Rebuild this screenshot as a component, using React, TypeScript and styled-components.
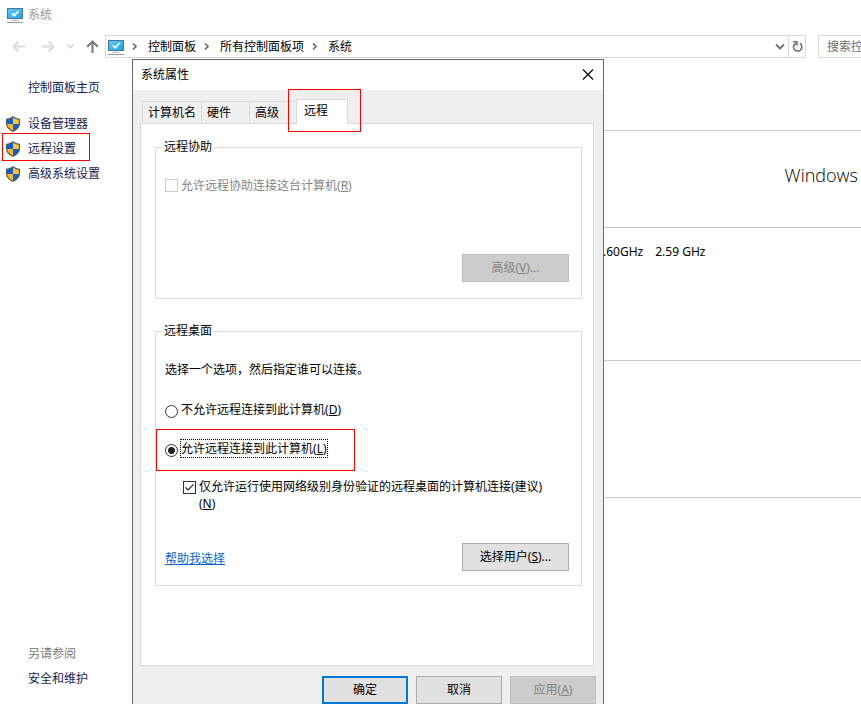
import React from "react";
import styled, { createGlobalStyle, css } from "styled-components";

const GlobalStyle = createGlobalStyle`
  *, *::before, *::after { box-sizing: border-box; }
  body {
    margin: 0;
    background: #fff;
    color: #000;
    font: 12px/16px "Noto Sans", "Noto Sans CJK SC", sans-serif;
  }
  button, input { font: inherit; color: inherit; }
`;

/* Red marker frame drawn around a highlighted element */
const marker = css`
  content: "";
  position: absolute;
  border: 1px solid #f00;
  pointer-events: none;
`;

const Window = styled.div`
  position: relative;
  display: flex;
  flex-direction: column;
  min-height: 100vh;
  overflow: hidden;
`;

const TitleBar = styled.header`
  display: flex;
  align-items: center;
  gap: 5px;
  height: 29px;
  padding-left: 7px;
  color: #999;
`;

const NavBar = styled.nav`
  display: flex;
  height: 23px;
  margin-top: 6px;
`;

const IconButton = styled.button`
  display: flex;
  align-items: center;
  justify-content: center;
  padding: 0;
  border: 0;
  background: none;
`;

const NavButtons = styled.div`
  display: flex;
  align-items: center;
  gap: 12px;
  flex: 0 0 105px;
  padding-left: 12px;
  ${IconButton}:first-child { margin-right: 5px; }
`;

const AddressBar = styled.div`
  display: flex;
  flex: 1;
  align-items: stretch;
  border: 1px solid #d9d9d9;
`;

const Crumbs = styled.ol`
  display: flex;
  flex: 1;
  align-items: center;
  margin: 0;
  padding: 0 0 0 2px;
  list-style: none;
`;

const Crumb = styled.li`
  display: flex;
  align-items: center;
  a { color: #000; text-decoration: none; }
`;

const CrumbArrow = styled.svg`
  width: 24px;
  height: 9px;
`;

const AddressButton = styled(IconButton)<{ $divided?: boolean }>`
  width: ${(p) => (p.$divided ? 17 : 16)}px;
  border-left: ${(p) => (p.$divided ? "1px solid #d9d9d9" : "0")};
`;

const SearchBox = styled.input`
  flex: 0 0 43px;
  width: 43px;
  margin-left: 12px;
  padding: 0 0 0 8px;
  border: 1px solid #d9d9d9;
  border-right: 0;
  border-radius: 0;
  outline: 0;
  &::placeholder { color: #6d6d6d; opacity: 1; }
`;

const Body = styled.div`
  display: flex;
  flex: 1;
`;

const Sidebar = styled.aside`
  display: flex;
  flex-direction: column;
  flex: 0 0 132px;
  padding: 22px 0 17px;
`;

const SideList = styled.ul`
  margin: 15px 0 auto;
  padding: 0;
  list-style: none;
`;

const SideItem = styled.li<{ $marked?: boolean }>`
  position: relative;
  display: flex;
  align-items: center;
  gap: 8px;
  height: 25px;
  padding-left: 5px;
  ${(p) =>
    p.$marked &&
    css`
      &::after { ${marker} left: 2px; top: -3px; width: 88px; height: 28px; }
    `}
`;

const SideLink = styled.a<{ $indent?: boolean }>`
  margin-left: ${(p) => (p.$indent ? 28 : 0)}px;
  color: #151c55;
  text-decoration: none;
`;

const SeeAlso = styled.div`
  margin: 0 0 9px 28px;
  color: #777;
`;

const Details = styled.main`
  flex: 1;
  min-width: 0;
  padding-top: 72px;
`;

const DetailSection = styled.section<{ $height: number }>`
  min-height: ${(p) => p.$height}px;
  border-top: 1px solid #c8c8c8;
`;

const Edition = styled.div`
  padding: 30px 3px 0 0;
  text-align: right;
  font: 18px/28px "Open Sans", "Noto Sans", sans-serif;
  font-weight: 300;
`;

const Processor = styled.div`
  display: flex;
  gap: 12px;
  padding: 16px 0 0 471px;
`;

const Dialog = styled.div`
  position: absolute;
  left: 132px;
  top: 59px;
  width: 472px;
  border: 1px solid #6b6b6b;
  border-bottom: 0;
  background: #efefef;
`;

const DialogTitle = styled.div`
  display: flex;
  align-items: center;
  justify-content: space-between;
  height: 30px;
  padding: 0 9px 0 8px;
  background: #fff;
`;

const Tabs = styled.div`
  display: flex;
  align-items: flex-end;
  height: 33px;
  padding-left: 9px;
`;

const Tab = styled.button<{ $width: number }>`
  position: relative;
  width: ${(p) => p.$width}px;
  height: 22px;
  padding: 0 0 0 5px;
  border: 1px solid #d9d9d9;
  border-width: 1px 0 0 1px;
  background: #f0f0f0;
  text-align: left;

  &[aria-selected="true"] {
    height: 25px;
    margin-bottom: -1px;
    padding: 0 0 2px 7px;
    border-right-width: 1px;
    background: #fff;
    z-index: 1;
  }
  &[aria-selected="true"]::after {
    ${marker}
    left: -9px;
    top: -11px;
    width: 73px;
    height: 43px;
  }
`;

const Panel = styled.div`
  margin: 0 9px 0 7px;
  padding: 15px 11px 79px 14px;
  border: 1px solid #d9d9d9;
  background: #fff;
`;

const Group = styled.fieldset`
  display: block;
  min-width: 0;
  margin: 0;
  padding: 0 12px 16px 9px;
  border: 1px solid #dcdcdc;
  & + & { margin-top: 24px; padding-bottom: 14px; }
`;

const Legend = styled.legend`
  margin-left: -3px;
  padding: 0 2px;
`;

const Option = styled.label<{ $top: number; $indent?: boolean; $muted?: boolean; $marked?: boolean }>`
  position: relative;
  display: flex;
  align-items: flex-start;
  gap: 3px;
  width: fit-content;
  margin: ${(p) => p.$top}px 0 0 ${(p) => (p.$indent ? 18 : 0)}px;
  line-height: 17px;
  color: ${(p) => (p.$muted ? "#838383" : "#000")};
  ${(p) =>
    p.$marked &&
    css`
      &::after { ${marker} left: -9px; top: -11px; width: 199px; height: 42px; }
    `}
`;

const FocusText = styled.span`
  outline: 1px dotted #000;
`;

const CheckBox = styled.input.attrs({ type: "checkbox" })`
  appearance: none;
  flex: none;
  width: 13px;
  height: 13px;
  margin: 3px 0 0;
  border: 1px solid #333;
  background: #fff;
  &:disabled { margin-top: 2px; border-color: #ccc; }
  &:checked {
    background: url("data:image/svg+xml,%3Csvg xmlns='http://www.w3.org/2000/svg' viewBox='0 0 11 11'%3E%3Cpath d='M1.5 5.5 4 8 9.5 2.3' fill='none' stroke='%23222' stroke-width='1.2'/%3E%3C/svg%3E");
  }
`;

const Radio = styled.input.attrs({ type: "radio" })`
  appearance: none;
  flex: none;
  width: 13px;
  height: 13px;
  margin: 4px 0 0;
  border: 1px solid #333;
  border-radius: 50%;
  background: #fff;
  &:checked { background: radial-gradient(circle, #222 3px, #fff 4px); }
`;

const Prompt = styled.p`
  margin: 23px 0 0;
`;

const GroupFooter = styled.div<{ $top: number }>`
  display: flex;
  align-items: center;
  justify-content: space-between;
  margin-top: ${(p) => p.$top}px;
`;

const HelpLink = styled.a`
  margin-top: 3px;
  color: #0066cc;
  text-decoration: underline;
`;

const PushButton = styled.button<{ $wide?: boolean; $primary?: boolean }>`
  width: ${(p) => (p.$wide ? 107 : 86)}px;
  height: 28px;
  margin-left: auto;
  padding: 0;
  border: ${(p) => (p.$primary ? "2px solid #0078d7" : "1px solid #adadad")};
  background: #e1e1e1;
  &:disabled {
    border-color: #bfbfbf;
    background: #ccc;
    color: #838383;
  }
`;

const DialogFooter = styled.div`
  display: flex;
  justify-content: flex-end;
  gap: 8px;
  padding: 10px 7px 0;
  ${PushButton} { margin-left: 0; }
`;

const MonitorIcon = () => (
  <svg width="16" height="16" viewBox="0 0 16 16" aria-hidden="true">
    <defs>
      <linearGradient id="screen" x1="0" y1="0" x2="1" y2="1">
        <stop offset="0" stopColor="#62c9fb" />
        <stop offset="1" stopColor="#1da2ed" />
      </linearGradient>
    </defs>
    <rect x="0.5" y="1.5" width="15" height="10" fill="url(#screen)" stroke="#4b7690" />
    <path d="M5 6.3 7.3 8.6 11.5 4" fill="none" stroke="#fff" strokeWidth="1.8" />
    <path d="M6 12h4v2H6z" fill="#dde3e6" />
    <path d="M0 15.5h16" stroke="#8799a5" />
    <path d="M4 13.5h8" stroke="#b6c3cb" />
  </svg>
);

const ShieldIcon = () => (
  <svg width="15" height="16" viewBox="0 0 15 16" aria-hidden="true">
    <path d="M8 0C9.6 1.6 12 2.5 15 2.7V7.5C15 11.5 12 14.2 8 16C4 14.2 1 11.5 1 7.5V2.7C4 2.5 6.4 1.6 8 0Z" fill="#56595c" />
    <path d="M8 1.6V8H2.2V3.8C4.6 3.5 6.5 2.8 8 1.6Z" fill="#0c62c9" />
    <path d="M8 1.6V8H13.8V3.8C11.4 3.5 9.5 2.8 8 1.6Z" fill="#ffc23c" />
    <path d="M8 8V14.7C4.7 13.1 2.3 11 2.2 8Z" fill="#ffb52c" />
    <path d="M8 8V14.7C11.3 13.1 13.7 11 13.8 8Z" fill="#0c62c9" />
  </svg>
);

const Arrow = ({ d, color, size, width = 2 }: { d: string; color: string; size: number; width?: number }) => (
  <svg width={size} height="13" viewBox={`0 0 ${size} 13`} aria-hidden="true">
    <path d={d} fill="none" stroke={color} strokeWidth={width} />
  </svg>
);

const Key = ({ k }: { k: string }) => (
  <>
    (<u>{k}</u>)
  </>
);

const crumbs = ["控制面板", "所有控制面板项", "系统"];
const sideLinks = ["设备管理器", "远程设置", "高级系统设置"];
const tabs = [
  { name: "计算机名", width: 59 },
  { name: "硬件", width: 48 },
  { name: "高级", width: 47 },
  { name: "远程", width: 52 },
];

export default function App() {
  return (
    <>
      <GlobalStyle />
      <Window>
        <TitleBar>
          <MonitorIcon />
          系统
        </TitleBar>
        <NavBar>
          <NavButtons>
            <IconButton aria-label="后退">
              <Arrow size={13} color="#dcdcdc" d="M13 6.5H2M6.5 1.5 1.5 6.5 6.5 11.5" />
            </IconButton>
            <IconButton aria-label="前进">
              <Arrow size={13} color="#dcdcdc" d="M0 6.5H11M6.5 1.5 11.5 6.5 6.5 11.5" />
            </IconButton>
            <IconButton aria-label="最近位置">
              <Arrow size={7} color="#d6d6d6" width={1.6} d="M0.5 4.5 3.5 7.5 6.5 4.5" />
            </IconButton>
            <IconButton aria-label="上移">
              <Arrow size={13} color="#777" d="M6.5 13V2M1.2 6.8 6.5 1.5 11.8 6.8" />
            </IconButton>
          </NavButtons>
          <AddressBar>
            <Crumbs>
              <MonitorIcon />
              {crumbs.map((name) => (
                <Crumb key={name}>
                  <CrumbArrow viewBox="0 0 24 9" aria-hidden="true">
                    <path d="M9 1.5 12 4.5 9 7.5" fill="none" stroke="#6a6a6a" strokeWidth="1.7" />
                  </CrumbArrow>
                  <a href="#crumb">{name}</a>
                </Crumb>
              ))}
            </Crumbs>
            <AddressButton aria-label="以前的位置">
              <Arrow size={10} color="#777" d="M1 4.5 5 8.5 9 4.5" />
            </AddressButton>
            <AddressButton $divided aria-label="刷新">
              <svg width="11" height="13" viewBox="0 0 11 13" aria-hidden="true">
                <path d="M8 3.6A4.1 4.1 0 1 1 2 5.2L4.2 2.8" fill="none" stroke="#777" strokeWidth="1.8" />
                <path d="M1 1.8H5V5.8" fill="none" stroke="#777" strokeWidth="1.5" />
              </svg>
            </AddressButton>
          </AddressBar>
          <SearchBox type="text" placeholder="搜索控制面板" aria-label="搜索控制面板" />
        </NavBar>
        <Body>
          <Sidebar>
            <SideLink $indent href="#home">控制面板主页</SideLink>
            <SideList>
              {sideLinks.map((name) => (
                <SideItem key={name} $marked={name === "远程设置"}>
                  <ShieldIcon />
                  <SideLink href="#settings">{name}</SideLink>
                </SideItem>
              ))}
            </SideList>
            <SeeAlso>另请参阅</SeeAlso>
            <SideLink $indent href="#security">安全和维护</SideLink>
          </Sidebar>
          <Details>
            <DetailSection $height={97}>
              <Edition>Windows</Edition>
            </DetailSection>
            <DetailSection $height={133}>
              <Processor>
                <span>.60GHz</span>
                <span>2.59 GHz</span>
              </Processor>
            </DetailSection>
            <DetailSection $height={137} />
            <DetailSection $height={137} />
          </Details>
        </Body>

        <Dialog role="dialog" aria-labelledby="dialog-title">
          <DialogTitle>
            <span id="dialog-title">系统属性</span>
            <IconButton aria-label="关闭">
              <svg width="12" height="12" viewBox="0 0 12 12" aria-hidden="true">
                <path d="M1 0.5 11 10.5M11 0.5 1 10.5" stroke="#000" strokeWidth="1.1" />
              </svg>
            </IconButton>
          </DialogTitle>
          <Tabs role="tablist">
            {tabs.map((t) => (
              <Tab key={t.name} role="tab" $width={t.width} aria-selected={t.name === "远程"}>
                {t.name}
              </Tab>
            ))}
          </Tabs>
          <Panel role="tabpanel">
            <Group>
              <Legend>远程协助</Legend>
              <Option $top={22} $muted>
                <CheckBox disabled />
                <span>允许远程协助连接这台计算机<Key k="R" /></span>
              </Option>
              <GroupFooter $top={60}>
                <PushButton $wide disabled>高级<Key k="V" />...</PushButton>
              </GroupFooter>
            </Group>
            <Group>
              <Legend>远程桌面</Legend>
              <Prompt>选择一个选项，然后指定谁可以连接。</Prompt>
              <Option $top={23}>
                <Radio name="remote" />
                <span>不允许远程连接到此计算机<Key k="D" /></span>
              </Option>
              <Option $top={22} $marked>
                <Radio name="remote" defaultChecked />
                <FocusText>允许远程连接到此计算机<Key k="L" /></FocusText>
              </Option>
              <Option $top={21} $indent>
                <CheckBox defaultChecked />
                <span>
                  仅允许运行使用网络级别身份验证的远程桌面的计算机连接(建议)
                  <br />
                  <Key k="N" />
                </span>
              </Option>
              <GroupFooter $top={31}>
                <HelpLink href="#help">帮助我选择</HelpLink>
                <PushButton $wide>选择用户<Key k="S" />...</PushButton>
              </GroupFooter>
            </Group>
          </Panel>
          <DialogFooter>
            <PushButton $primary>确定</PushButton>
            <PushButton>取消</PushButton>
            <PushButton disabled>应用<Key k="A" /></PushButton>
          </DialogFooter>
        </Dialog>
      </Window>
    </>
  );
}
